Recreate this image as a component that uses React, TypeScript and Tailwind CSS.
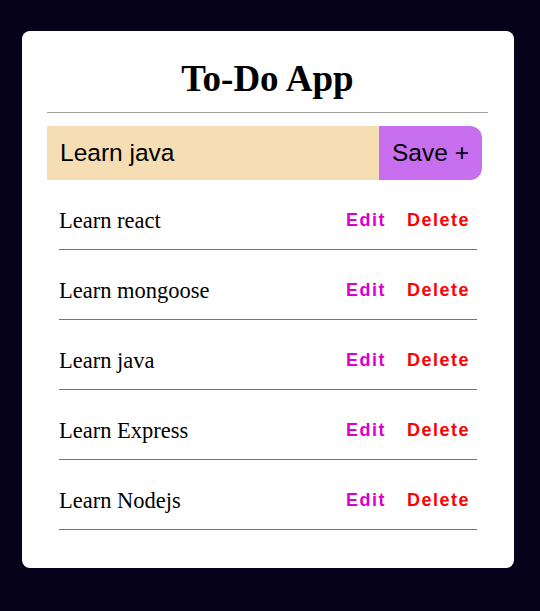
import { useState } from "react";

const initialTodos = [
  "Learn react",
  "Learn mongoose",
  "Learn java",
  "Learn Express",
  "Learn Nodejs",
];

export default function App() {
  const [todos] = useState(initialTodos);
  const [text, setText] = useState("Learn java");

  return (
    <div className="min-h-screen w-full bg-[#05021a] pt-[31px] pl-[22px]">
      <div className="w-[492px] rounded-[8px] bg-white pt-[27px] pr-[26px] pb-[38px] pl-[25px]">
        <h1 className="text-center font-['Liberation_Serif',serif] text-[37px] leading-[41px] font-bold text-black">
          To-Do App
        </h1>
        <div className="mt-[13px] h-px w-full bg-[#a0a0a0]" />
        <div className="mt-[13px] flex h-[54px] w-[435px]">
          <input
            value={text}
            onChange={(e) => setText(e.target.value)}
            className="h-full min-w-0 flex-1 bg-[#f5deb3] pl-[13px] font-['Liberation_Sans',Arial,sans-serif] text-[24.5px] text-black outline-none"
          />
          <button className="h-full w-[103px] rounded-r-[12px] bg-[#c86ff0] font-['Liberation_Sans',Arial,sans-serif] text-[24.5px] text-black">
            Save +
          </button>
        </div>
        <ul className="ml-[12px] w-[418px]">
          {todos.map((todo) => (
            <li
              key={todo}
              className="mt-[12px] flex h-[58px] items-center justify-between border-b border-b-[#ff4500]"
            >
              <span className="font-['Liberation_Serif',serif] text-[22.5px] text-black">
                {todo}
              </span>
              <div className="mr-[7px] flex gap-[21px] font-['Liberation_Sans',Arial,sans-serif] text-[18px] font-bold tracking-[1.5px]">
                <button className="text-[#dd00cc]">Edit</button>
                <button className="text-[#ff0000]">Delete</button>
              </div>
            </li>
          ))}
        </ul>
      </div>
    </div>
  );
}
